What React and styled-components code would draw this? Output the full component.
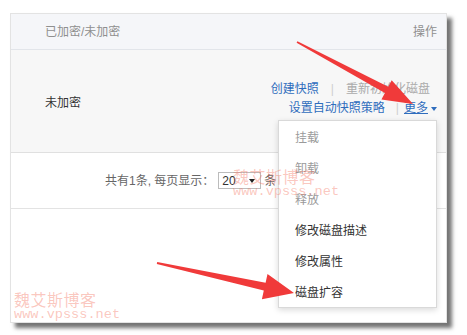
import React from "react";
import styled, { createGlobalStyle } from "styled-components";

const GlobalStyle = createGlobalStyle`
  * { box-sizing: border-box; }
  body {
    margin: 0;
    background: #fff;
    font-family: "Liberation Sans", "Noto Sans CJK SC", sans-serif;
    font-size: 12px;
  }
`;

const menuItems = [
  { label: "挂载", disabled: true },
  { label: "卸载", disabled: true },
  { label: "释放", disabled: true },
  { label: "修改磁盘描述" },
  { label: "修改属性" },
  { label: "磁盘扩容" },
];

// tapered arrow polygon from tail to tip
const arrowPoints = (tail, tip, headLen, headHalf, shaftHalf, tailHalf) => {
  const dx = tip[0] - tail[0];
  const dy = tip[1] - tail[1];
  const len = Math.hypot(dx, dy);
  const u = [dx / len, dy / len];
  const n = [-u[1], u[0]];
  const b = [tip[0] - headLen * u[0], tip[1] - headLen * u[1]];
  const off = (p, k) => [p[0] + k * n[0], p[1] + k * n[1]];
  const pts = [
    off(tail, tailHalf),
    off(b, shaftHalf),
    off(b, headHalf),
    tip,
    off(b, -headHalf),
    off(b, -shaftHalf),
    off(tail, -tailHalf),
  ];
  return pts.map((p) => p.map((v) => v.toFixed(1)).join(",")).join(" ");
};

const Page = styled.div`
  position: relative;
  width: 467px;
  height: 335px;
  overflow: hidden;
  padding: 13px 0 0 10px;
`;

const Panel = styled.div`
  position: relative;
  width: 437px;
  height: 310px;
  background: #fff;
  border: 1px solid #e3e3e3;
  box-shadow: 5px 5px 4px rgba(0, 0, 0, 0.55);
`;

const HeaderRow = styled.div`
  display: flex;
  align-items: center;
  justify-content: space-between;
  height: 36px;
  padding: 0 9px 0 34px;
  background: #f5f6f9;
  border-bottom: 1px solid #e2e5ea;
  color: #8f8f8f;
  line-height: 18px;
`;

const DataRow = styled.div`
  display: flex;
  align-items: center;
  justify-content: space-between;
  height: 103px;
  padding: 0 9px 0 34px;
  background: #f7f7f7;
  border-bottom: 1px solid #e0e0e0;
  color: #333;
`;

const Actions = styled.div`
  display: flex;
  flex-direction: column;
  align-items: flex-end;
  padding-bottom: 4px;
  line-height: 19px;
`;

const ActionLine = styled.div`
  display: flex;
  align-items: center;
  padding-right: ${(p) => p.$pad || 0}px;
`;

const Link = styled.span`
  color: ${(p) => (p.$disabled ? "#ababab" : "#2f6dbd")};
  text-decoration: ${(p) => (p.$underline ? "underline" : "none")};
`;

const Sep = styled.span`
  color: #cfcfcf;
  margin: ${(p) => (p.$tight ? "0 5px 0 11px" : "0 12px")};
`;

const Caret = styled.span`
  display: inline-block;
  margin-left: 3px;
  border-left: 3.5px solid transparent;
  border-right: 3.5px solid transparent;
  border-top: 4px solid ${(p) => p.$color || "#2f6dbd"};
`;

const Pager = styled.div`
  display: flex;
  align-items: center;
  height: 56px;
  padding-left: 94px;
  border-bottom: 1px solid #e3e3e3;
  color: #666;
  line-height: 18px;
`;

const Select = styled.div`
  display: flex;
  align-items: center;
  justify-content: space-between;
  width: 43px;
  height: 17px;
  margin: 0 3px 0 4px;
  padding: 0 5px 0 3px;
  border: 1px solid #bcbcbc;
  background: #fff;
  color: #333;
  font-size: 12px;
`;

const Menu = styled.div`
  position: absolute;
  top: 106px;
  left: 267px;
  width: 159px;
  background: #fff;
  border: 1px solid #d9d9d9;
  box-shadow: 0 2px 6px rgba(0, 0, 0, 0.15);
`;

const MenuItem = styled.div`
  height: 31px;
  display: flex;
  align-items: center;
  padding-left: 16px;
  color: ${(p) => (p.$disabled ? "#9a9a9a" : "#333")};
`;

const Overlay = styled.svg`
  position: absolute;
  left: 0;
  top: 0;
  pointer-events: none;
`;

const Watermark = styled.div`
  position: absolute;
  left: ${(p) => p.$x}px;
  top: ${(p) => p.$y}px;
  color: rgba(245, 120, 100, 0.42);
  pointer-events: none;
`;

const MarkTitle = styled.div`
  font-family: "Noto Sans CJK SC", sans-serif;
  font-size: 16px;
  line-height: 17px;
  letter-spacing: 0.5px;
`;

const MarkUrl = styled.div`
  font-family: "Liberation Mono", monospace;
  font-size: 13.6px;
  line-height: 13px;
`;

export default function App() {
  return (
    <Page>
      <GlobalStyle />
      <Panel>
        <HeaderRow>
          <span>已加密/未加密</span>
          <span>操作</span>
        </HeaderRow>
        <DataRow>
          <span>未加密</span>
          <Actions>
            <ActionLine $pad={7}>
              <Link>创建快照</Link>
              <Sep>|</Sep>
              <Link $disabled>重新初始化磁盘</Link>
            </ActionLine>
            <ActionLine>
              <Link>设置自动快照策略</Link>
              <Sep $tight>|</Sep>
              <Link $underline>更多</Link>
              <Caret />
            </ActionLine>
          </Actions>
        </DataRow>
        <Pager>
          <span>共有1条, 每页显示：</span>
          <Select>
            <span>20</span>
            <Caret $color="#222" />
          </Select>
          <span>条</span>
        </Pager>
        <Menu>
          {menuItems.map((item) => (
            <MenuItem key={item.label} $disabled={item.disabled}>
              {item.label}
            </MenuItem>
          ))}
        </Menu>
      </Panel>

      <Watermark $x={233} $y={168}>
        <MarkTitle>魏艾斯博客</MarkTitle>
        <MarkUrl>www.vpsss.net</MarkUrl>
      </Watermark>
      <Watermark $x={14} $y={291}>
        <MarkTitle>魏艾斯博客</MarkTitle>
        <MarkUrl>www.vpsss.net</MarkUrl>
      </Watermark>

      <Overlay width="467" height="335" viewBox="0 0 467 335">
        <polygon
          points={arrowPoints([297, 42], [413, 104], 30, 11, 3.5, 0.8)}
          fill="#f03a3a"
        />
        <polygon
          points={arrowPoints([157, 263], [294, 293], 30, 13, 4, 1)}
          fill="#f03a3a"
        />
      </Overlay>
    </Page>
  );
}
